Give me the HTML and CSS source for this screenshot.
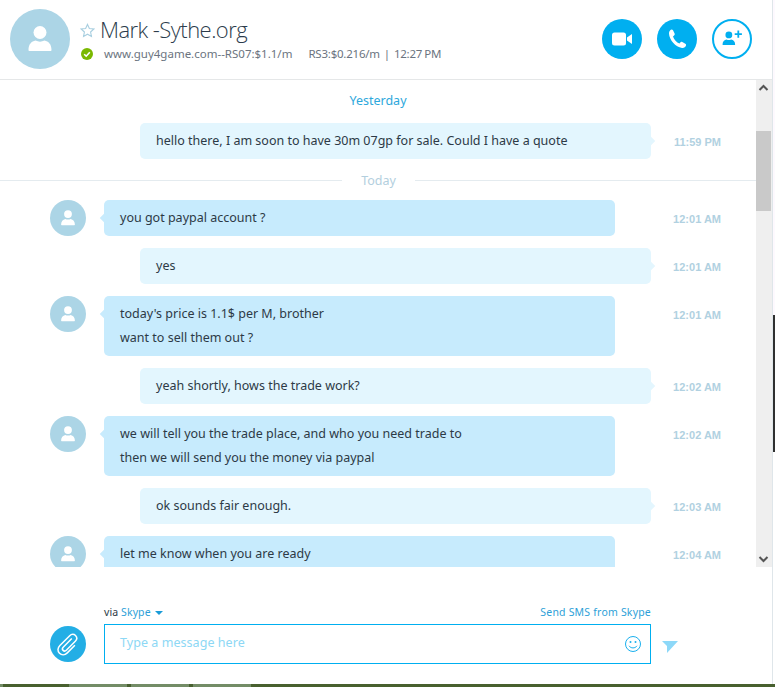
FILE: index.html
```html
<!DOCTYPE html>
<html lang="en">
<head>
<meta charset="utf-8">
<title>Skype chat</title>
<link rel="stylesheet" href="styles.css">
</head>
<body>
<div class="desktop">
  <div class="window">
    <header class="header">
      <div class="avatar avatar-lg">
        <svg viewBox="0 0 60 60" class="person"><circle cx="30" cy="23.5" r="6.5"/><path d="M18.500 41c0-6 3-8.500 7-9.500 3 1.500 6 1.500 9 0 4 1 7 3.500 7 9.500 0 .6-.4 1-1 1h-21c-.6 0-1-.4-1-1z"/></svg>
      </div>
      <div class="head-info">
        <div class="name-line">
          <svg class="star" viewBox="0 0 16 16"><path d="M8 1.500l2 4.300 4.700.6-3.400 3.200.9 4.700L8 12l-4.200 2.300.9-4.700L1.300 6.400 6 5.800z"/></svg>
          <span class="name">Mark -Sythe.org</span>
        </div>
        <div class="status-line">
          <svg class="presence" viewBox="0 0 12 12"><circle cx="6" cy="6" r="6"/><path d="M3.200 6.200l2 2 3.600-4"/></svg>
          <span class="mood">www.guy4game.com--RS07:$1.1/m</span>
          <span class="mood mood-2">RS3:$0.216/m&nbsp; |&nbsp; 12:27 PM</span>
        </div>
      </div>
      <div class="actions">
        <button class="circle">
          <svg viewBox="0 0 40 40" width="40" height="40"><rect x="10" y="13.500" width="14" height="13" rx="2.500" fill="#fff"/><path d="M25 18.500l5-3.500v10l-5-3.500z" fill="#fff"/></svg>
        </button>
        <button class="circle">
          <svg viewBox="0 0 40 40" width="40" height="40"><path d="M14.500 10.500c-1.500.5-2.500 2-2.500 4 .3 6.500 6.500 13.500 13 14.500 2 .2 3.500-.8 4-2.500.2-.8 0-1.300-.7-1.700l-3-1.800c-.7-.4-1.300-.3-1.800.3l-1 1.200c-3-1-5.500-4-6.500-7l1.300-1.200c.5-.5.600-1.100.3-1.800l-1.600-3.300c-.4-.7-1-.9-2-.7z" fill="#fff"/></svg>
        </button>
        <button class="circle circle-outline">
          <svg viewBox="0 0 40 40" width="38" height="38"><circle cx="16.500" cy="15.500" r="3.800" fill="#00aff0"/><path d="M9.500 26c0-3.500 2-5 4.500-5.500 1.600.9 3.400.9 5 0 2.500.5 4.500 2 4.500 5.500 0 .4-.3.700-.7.700H10.200c-.4 0-.7-.3-.7-.7z" fill="#00aff0"/><path d="M27 10.500v8M23 14.500h8" stroke="#00aff0" stroke-width="2" fill="none"/></svg>
        </button>
      </div>
    </header>

    <main class="conversation">
      <div class="messages">
        <div class="day day-first">Yesterday</div>
        <div class="row row-out">
          <div class="bubble bubble-out">hello there, I am soon to have 30m 07gp for sale. Could I have a quote</div>
          <time class="time">11:59 PM</time>
        </div>
        <div class="day-rule"><span>Today</span></div>
        <div class="row">
          <div class="avatar avatar-sm"><svg viewBox="0 0 60 60" class="person"><circle cx="30" cy="23.500" r="6.500"/><path d="M18.500 41c0-6 3-8.500 7-9.500 3 1.500 6 1.500 9 0 4 1 7 3.500 7 9.500 0 .6-.4 1-1 1h-21c-.6 0-1-.4-1-1z"/></svg></div>
          <div class="bubble bubble-in">you got paypal account ?</div>
          <time class="time">12:01 AM</time>
        </div>
        <div class="row row-out">
          <div class="bubble bubble-out">yes</div>
          <time class="time">12:01 AM</time>
        </div>
        <div class="row">
          <div class="avatar avatar-sm"><svg viewBox="0 0 60 60" class="person"><circle cx="30" cy="23.500" r="6.500"/><path d="M18.500 41c0-6 3-8.500 7-9.500 3 1.500 6 1.500 9 0 4 1 7 3.500 7 9.500 0 .6-.4 1-1 1h-21c-.6 0-1-.4-1-1z"/></svg></div>
          <div class="bubble bubble-in">today's price is 1.1$ per M, brother<br>want to sell them out ?</div>
          <time class="time">12:01 AM</time>
        </div>
        <div class="row row-out">
          <div class="bubble bubble-out">yeah shortly, hows the trade work?</div>
          <time class="time">12:02 AM</time>
        </div>
        <div class="row">
          <div class="avatar avatar-sm"><svg viewBox="0 0 60 60" class="person"><circle cx="30" cy="23.500" r="6.500"/><path d="M18.500 41c0-6 3-8.500 7-9.500 3 1.500 6 1.500 9 0 4 1 7 3.500 7 9.500 0 .6-.4 1-1 1h-21c-.6 0-1-.4-1-1z"/></svg></div>
          <div class="bubble bubble-in">we will tell you the trade place, and who you need trade to<br>then we will send you the money via paypal</div>
          <time class="time">12:02 AM</time>
        </div>
        <div class="row row-out">
          <div class="bubble bubble-out">ok sounds fair enough.</div>
          <time class="time">12:03 AM</time>
        </div>
        <div class="row">
          <div class="avatar avatar-sm"><svg viewBox="0 0 60 60" class="person"><circle cx="30" cy="23.500" r="6.500"/><path d="M18.500 41c0-6 3-8.500 7-9.500 3 1.500 6 1.500 9 0 4 1 7 3.500 7 9.500 0 .6-.4 1-1 1h-21c-.6 0-1-.4-1-1z"/></svg></div>
          <div class="bubble bubble-in">let me know when you are ready</div>
          <time class="time">12:04 AM</time>
        </div>
      </div>
      <div class="scrollbar">
        <svg class="arrow" viewBox="0 0 15 14"><path d="M3.500 9l4-4 4 4"/></svg>
        <div class="track"><div class="thumb"></div></div>
        <svg class="arrow" viewBox="0 0 15 14"><path d="M3.500 5l4 4 4-4"/></svg>
      </div>
    </main>

    <footer class="composer">
      <div class="composer-meta">
        <span class="via">via <a class="link">Skype</a><i class="caret"></i></span>
        <a class="link sms">Send SMS from Skype</a>
      </div>
      <div class="composer-row">
        <button class="attach">
          <svg viewBox="0 0 36 36" width="36" height="36"><path d="M22.800 13.500l-8.600 8.700c-1 1-1 2.300-.1 3.200.9.900 2.200.9 3.200-.1l9-9c1.800-1.800 1.800-4.200.2-5.800-1.600-1.600-4-1.600-5.800.2l-9.800 9.800c-2.500 2.500-2.500 5.700-.4 7.800 2.100 2.100 5.300 2.100 7.800-.4l7.600-7.600" fill="none" stroke="#fff" stroke-width="1.500" transform="translate(-1 -1)"/></svg>
        </button>
        <div class="input">
          <span class="placeholder">Type a message here</span>
          <svg class="smiley" viewBox="0 0 18 18" width="18" height="18"><circle cx="9" cy="9" r="7.500"/><circle cx="6.500" cy="7" r="1" class="eye"/><circle cx="11.500" cy="7" r="1" class="eye"/><path d="M5 10.800c1.800 2.800 6.200 2.800 8 0"/></svg>
        </div>
        <svg class="send" viewBox="0 0 16 12" width="16" height="12"><path d="M0 0h16L5 12V5z"/></svg>
      </div>
    </footer>
  </div>
  <div class="edge-dark"></div>
  <div class="taskbar">
    <span class="task task-0"></span>
    <span class="task task-1"></span>
    <span class="task task-2"></span>
    <span class="task task-3"></span>
  </div>
</div>
</body>
</html>
```

FILE: styles.css
```css
* { box-sizing: border-box; }
html, body { margin: 0; padding: 0; background: #fff; }
body { font-family: "Noto Sans", "Open Sans", sans-serif; color: #2d3a46; overflow: hidden; }

.desktop { position: relative; width: 775px; height: 687px; background: linear-gradient(#fdf9fe 315px, #fff 315px); overflow: hidden; }

.window {
  display: flex; flex-direction: column;
  width: 773px; height: 684px;
  background: #fff;
  border-right: 1px solid #dfe6ea;
}

/* header */
.header {
  display: flex; align-items: center;
  height: 80px; flex: none;
  padding: 0 20px 1px 10px;
  border-bottom: 1px solid #e5e7e8;
}
.avatar { border-radius: 50%; background: #acd5e6; flex: none; }
.avatar-lg { width: 60px; height: 60px; margin-right: 10px; }
.avatar-sm { width: 36px; height: 36px; margin-right: 18px; }
.person { display: block; width: 100%; height: 100%; fill: #fff; }

.head-info { flex: 1; display: flex; flex-direction: column; margin-bottom: 1px; }
.name-line { display: flex; align-items: center; height: 28px; }
.star { width: 15px; height: 15px; margin: 3px 5px 0 0; fill: none; stroke: #a9cfe0; stroke-width: 1.200; }
.name { font-family: "Open Sans", sans-serif; font-size: 22px; font-weight: 300; color: #2c3c4c; letter-spacing: -.55px; line-height: 28px; }
.status-line { display: flex; align-items: center; height: 18px; margin-top: 2px; }
.presence { width: 12px; height: 12px; margin: 0 11px 0 1px; fill: #7ab800; }
.presence path { fill: none; stroke: #fff; stroke-width: 1.600; }
.mood { font-size: 11.500px; color: #6b7480; white-space: nowrap; }
.mood-2 { margin-left: 16px; letter-spacing: -.22px; word-spacing: -.8px; }

.actions { display: flex; gap: 15px; }
.circle {
  width: 40px; height: 40px; padding: 0; border: 0; border-radius: 50%;
  background: #00aff0; display: flex; align-items: center; justify-content: center;
}
.circle-outline { background: #fff; border: 2px solid #00aff0; }

/* conversation */
.conversation { display: flex; height: 487px; flex: none; }
.messages { width: 756px; flex: none; overflow: hidden; }

.day { height: 43px; padding-top: 11px; text-align: center; font-size: 12.500px; line-height: 20px; color: #2da8dc; }
.day-rule { height: 18px; margin-bottom: 11px; display: flex; align-items: center; justify-content: center; }
.day-rule::before { content: ""; flex: 1; height: 1px; background: #e4ebef; }
.day-rule::after { content: ""; flex: 1; height: 1px; background: #e4ebef; }
.day-rule span { width: 72px; text-align: center; font-size: 12.500px; color: #b3cfde; margin-left: 1px; }

.row { display: flex; align-items: flex-start; padding: 0 35px 0 50px; margin-bottom: 12px; }
.row-out { padding-left: 140px; }
.bubble {
  position: relative;
  width: 511px; flex: none;
  padding: 6px 16px 6px;
  border-radius: 5px;
  font-size: 12.500px; line-height: 24px;
  color: #2d3a46;
}
.bubble-in { background: #c7ebfd; }
.bubble-out { background: #e3f6fe; }
.bubble::after {
  content: ""; position: absolute; top: 15px; width: 6px; height: 6px;
  transform: rotate(45deg);
}
.bubble-in::after { left: -3px; background: #c7ebfd; }
.bubble-out::after { right: -3px; background: #e3f6fe; }
.time { margin-left: auto; padding-top: 12px; font-family: "Liberation Sans", sans-serif; font-size: 11px; line-height: 14px; font-weight: 700; color: #b1d1e1; white-space: nowrap; }

/* scrollbar */
.scrollbar { width: 16px; flex: none; display: flex; flex-direction: column; background: #efefef; }
.arrow { width: 15px; height: 14px; flex: none; margin-top: 1px; fill: none; stroke: #555; stroke-width: 2; }
.arrow:last-child { margin: 0 0 1px; }
.track { flex: 1; padding-top: 36px; }
.thumb { width: 15px; height: 80px; background: #c9c9c9; }

/* composer */
.composer { flex: 1; padding: 37px 0 0 50px; }
.composer-meta { display: flex; justify-content: space-between; align-items: center; width: 601px; padding-left: 54px; height: 16px; font-size: 10.500px; }
.via { color: #2d3a46; letter-spacing: .1px; }
.link { color: #2d9fd8; }
.sms { letter-spacing: .2px; }
.caret { display: inline-block; margin-left: 4px; border: 4px solid transparent; border-top: 4px solid #1a9bd7; border-bottom: 0; vertical-align: 1px; }
.composer-row { display: flex; align-items: center; margin-top: 4px; }
.attach { width: 36px; height: 36px; margin-right: 18px; padding: 0; border: 0; border-radius: 50%; background: #23aee5; display: flex; }
.input { width: 547px; height: 40px; border: 1px solid #00aff0; display: flex; align-items: center; justify-content: space-between; padding: 0 8px 0 15px; }
.placeholder { font-size: 12.500px; color: #8dd8f5; letter-spacing: .05px; margin-bottom: 4px; }
.smiley { fill: none; stroke: #19b0ee; stroke-width: 1; }
.smiley .eye { fill: #19b0ee; stroke: none; }
.send { margin-left: 11px; fill: #8dd8f8; margin-top: 6px; }

/* what shows around the window */
.edge-dark { position: absolute; left: 773px; top: 315px; width: 2px; height: 137px; background: #2f3030; }
.taskbar { position: absolute; left: 0; right: 0; top: 684px; height: 3px; background: #48602f; }
.task { position: absolute; top: 0; height: 3px; background: #738c66; }
.task-0 { left: 0; width: 3px; }
.task-1 { left: 69px; width: 58px; }
.task-2 { left: 131px; width: 58px; }
.task-3 { left: 193px; width: 58px; }
```
